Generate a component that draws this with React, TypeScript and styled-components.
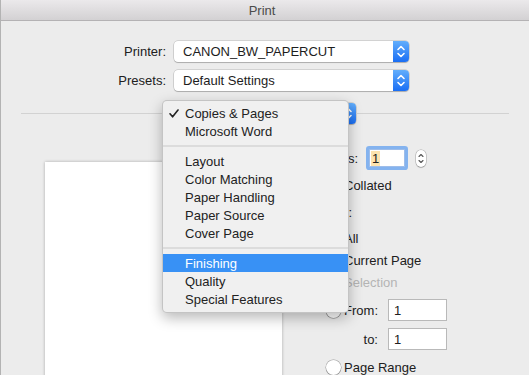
import React from "react";
import styled, { createGlobalStyle } from "styled-components";

const Global = createGlobalStyle`
  html, body { margin: 0; padding: 0; background: #ececec; }
  body { font-family: "Liberation Sans", Arial, sans-serif; font-size: 13px; color: #222; }
  * { box-sizing: border-box; }
`;

const Window = styled.div`
  position: relative;
  width: 529px;
  height: 375px;
  overflow: hidden;
  background: #ececec;
  border-left: 1px solid #b3b3b3;
`;

const TitleBar = styled.div`
  height: 21px;
  border-bottom: 1px solid #b4b2b4;
  background: linear-gradient(#ebe9eb, #d3d1d3);
  display: flex;
  align-items: center;
  justify-content: center;
  padding-right: 6px;
  color: #4b4b4b;
  font-size: 13px;
`;

const Form = styled.div`
  display: grid;
  grid-template-columns: 165px 235px;
  column-gap: 8px;
  row-gap: 8px;
  padding-top: 20px;
`;

const Label = styled.div<{ $w?: number }>`
  text-align: right;
  display: flex;
  align-items: center;
  justify-content: flex-end;
  color: #202020;
  ${(p) => (p.$w ? `width: ${p.$w}px; flex: none;` : "")}
`;

const Popup = styled.div<{ $w?: number }>`
  height: 21px;
  ${(p) => (p.$w ? `width: ${p.$w}px; flex: none;` : "")}
  display: flex;
  align-items: stretch;
  background: #fff;
  border-radius: 4px;
  box-shadow: 0 0 0 0.5px rgba(0, 0, 0, 0.22), 0 1px 1px rgba(0, 0, 0, 0.18);
`;

const PopupText = styled.div`
  flex: 1;
  display: flex;
  align-items: center;
  padding-left: 9px;
  color: #1d1d1d;
`;

const PopupArrow = styled.div`
  width: 16px;
  flex: none;
  border-radius: 0 4px 4px 0;
  background: linear-gradient(#62aefc, #1a6ef4);
  display: flex;
  align-items: center;
  justify-content: center;
`;

const SepRow = styled.div`
  display: flex;
  align-items: center;
  margin-top: 12px;
  height: 21px;
  padding: 0 20px 0 20px;
`;

const Line = styled.div`
  flex: 1;
  height: 1px;
  background: #d2d2d2;
`;

const Content = styled.div`
  display: flex;
  align-items: flex-start;
  padding-left: 44px;
`;

const Page = styled.div`
  width: 237px;
  height: 240px;
  margin-top: 38px;
  background: #fff;
  box-shadow: 0 0 3px rgba(0, 0, 0, 0.28);
  flex: none;
`;

const Settings = styled.div`
  margin-left: 18px;
  padding-top: 22px;
  display: flex;
  flex-direction: column;
  width: 229px;
`;

const Row = styled.div<{ $h: number; $indent?: number }>`
  height: ${(p) => p.$h}px;
  display: flex;
  align-items: center;
  padding-left: ${(p) => p.$indent ?? 0}px;
  color: #202020;
`;

const CopiesInput = styled.div`
  width: 36px;
  height: 18px;
  margin-left: 11px;
  background: #fff;
  border: 1px solid #9ebde9;
  box-shadow: 0 0 0 3px #84b3ef;
  border-radius: 1px;
  display: flex;
  align-items: center;
  padding-left: 1px;
`;

const Selected = styled.span`
  background: #fde3ae;
  padding: 0 1px;
  line-height: 15px;
`;

const Stepper = styled.div`
  width: 10px;
  height: 17px;
  margin-left: 11px;
  background: #fff;
  border-radius: 5px;
  box-shadow: 0 0 0 0.5px rgba(0, 0, 0, 0.3), 0 1px 1px rgba(0, 0, 0, 0.15);
  display: flex;
  align-items: center;
  justify-content: center;
`;

const Check = styled.div`
  width: 14px;
  height: 14px;
  border-radius: 3px;
  background: linear-gradient(#5aa9fc, #1a6ef4);
  margin-right: 4px;
  display: flex;
  align-items: center;
  justify-content: center;
`;

const Radio = styled.div<{ $on?: boolean; $off?: boolean }>`
  width: 15px;
  height: 15px;
  flex: none;
  border-radius: 50%;
  margin-right: 3px;
  background: ${(p) => (p.$on ? "linear-gradient(#5aa9fc, #1a6ef4)" : "#fff")};
  box-shadow: 0 0 0 0.5px rgba(0, 0, 0, ${(p) => (p.$off ? 0.15 : 0.35)}), 0 1px 1px rgba(0, 0, 0, 0.12);
  display: flex;
  align-items: center;
  justify-content: center;
  &::after {
    content: "";
    width: 5px;
    height: 5px;
    border-radius: 50%;
    background: #fff;
    display: ${(p) => (p.$on ? "block" : "none")};
  }
`;

const Text = styled.span<{ $dim?: boolean }>`
  color: ${(p) => (p.$dim ? "#b4b4b4" : "#202020")};
`;

const Field = styled.div`
  width: 59px;
  height: 22px;
  margin-left: 10px;
  background: #fff;
  border: 1px solid #b9b9b9;
  display: flex;
  align-items: center;
  padding-left: 5px;
`;

const Menu = styled.div`
  position: absolute;
  left: 161px;
  top: 100px;
  width: 187px;
  height: 213px;
  padding-top: 3px;
  background: #f0f0f0;
  border-radius: 5px;
  border: 0.5px solid rgba(0, 0, 0, 0.18);
  box-shadow: 0 5px 14px rgba(0, 0, 0, 0.28);
  display: flex;
  flex-direction: column;
`;

const Item = styled.div<{ $active?: boolean }>`
  position: relative;
  height: 18px;
  display: flex;
  align-items: center;
  padding-left: 22px;
  color: ${(p) => (p.$active ? "#fff" : "#222")};
  background: ${(p) => (p.$active ? "#3891f5" : "transparent")};
`;

const Tick = styled.svg`
  position: absolute;
  left: 6px;
  top: 5px;
`;

const MenuSep = styled.div`
  height: 12px;
  display: flex;
  align-items: center;
  &::before {
    content: "";
    flex: 1;
    height: 2px;
    background: #dcdcdc;
  }
`;

const Chevrons = ({ color = "#fff", w = 16, h = 21 }: { color?: string; w?: number; h?: number }) => (
  <svg width={w} height={h} viewBox="0 0 16 21">
    <path d="M5 8.5 L8 5.5 L11 8.5 M5 12.5 L8 15.5 L11 12.5" fill="none" stroke={color} strokeWidth="1.6" strokeLinecap="round" strokeLinejoin="round" />
  </svg>
);

export default function App() {
  const top = ["Copies & Pages", "Microsoft Word"];
  const mid = ["Layout", "Color Matching", "Paper Handling", "Paper Source", "Cover Page"];
  const bot = ["Finishing", "Quality", "Special Features"];
  return (
    <>
      <Global />
      <Window>
        <TitleBar>Print</TitleBar>
        <Form>
          <Label>Printer:</Label>
          <Popup>
            <PopupText>CANON_BW_PAPERCUT</PopupText>
            <PopupArrow><Chevrons /></PopupArrow>
          </Popup>
          <Label>Presets:</Label>
          <Popup>
            <PopupText>Default Settings</PopupText>
            <PopupArrow><Chevrons /></PopupArrow>
          </Popup>
        </Form>
        <SepRow>
          <Line />
          <Popup $w={182}>
            <PopupText />
            <PopupArrow><Chevrons /></PopupArrow>
          </Popup>
          <Line />
        </SepRow>
        <Content>
          <Page />
          <Settings>
            <Row $h={24}>
              <Label $w={58}>Copies:</Label>
              <CopiesInput><Selected>1</Selected></CopiesInput>
              <Stepper>
                <svg width="10" height="17" viewBox="0 0 10 17">
                  <path d="M3 6.5 L5 4.5 L7 6.5 M3 10.5 L5 12.5 L7 10.5" fill="none" stroke="#555" strokeWidth="1.1" strokeLinecap="round" strokeLinejoin="round" />
                </svg>
              </Stepper>
            </Row>
            <Row $h={30} $indent={26}>
              <Check>
                <svg width="10" height="10" viewBox="0 0 10 10">
                  <path d="M2 5.2 L4.2 7.5 L8 2.5" fill="none" stroke="#fff" strokeWidth="1.6" />
                </svg>
              </Check>
              <Text>Collated</Text>
            </Row>
            <Row $h={24}>
              <Label $w={52}>Pages:</Label>
            </Row>
            <Row $h={28} $indent={26}>
              <Radio $on />
              <Text>All</Text>
            </Row>
            <Row $h={16} $indent={26}>
              <Radio />
              <Text>Current Page</Text>
            </Row>
            <Row $h={28} $indent={26}>
              <Radio $off />
              <Text $dim>Selection</Text>
            </Row>
            <Row $h={28} $indent={26}>
              <Radio />
              <Label $w={34}>From:</Label>
              <Field>1</Field>
            </Row>
            <Row $h={30} $indent={44}>
              <Label $w={34}>to:</Label>
              <Field>1</Field>
            </Row>
            <Row $h={26} $indent={26}>
              <Radio />
              <Text>Page Range</Text>
            </Row>
          </Settings>
        </Content>
        <Menu>
          {top.map((t, i) => (
            <Item key={t}>
              {i === 0 && (
                <Tick width="10" height="9" viewBox="0 0 10 9">
                  <path d="M1 4.8 L3.6 7.8 L9 1" fill="none" stroke="#222" strokeWidth="1.6" strokeLinecap="round" strokeLinejoin="round" />
                </Tick>
              )}
              {t}
            </Item>
          ))}
          <MenuSep />
          {mid.map((t) => (
            <Item key={t}>{t}</Item>
          ))}
          <MenuSep />
          {bot.map((t) => (
            <Item key={t} $active={t === "Finishing"}>{t}</Item>
          ))}
        </Menu>
      </Window>
    </>
  );
}
